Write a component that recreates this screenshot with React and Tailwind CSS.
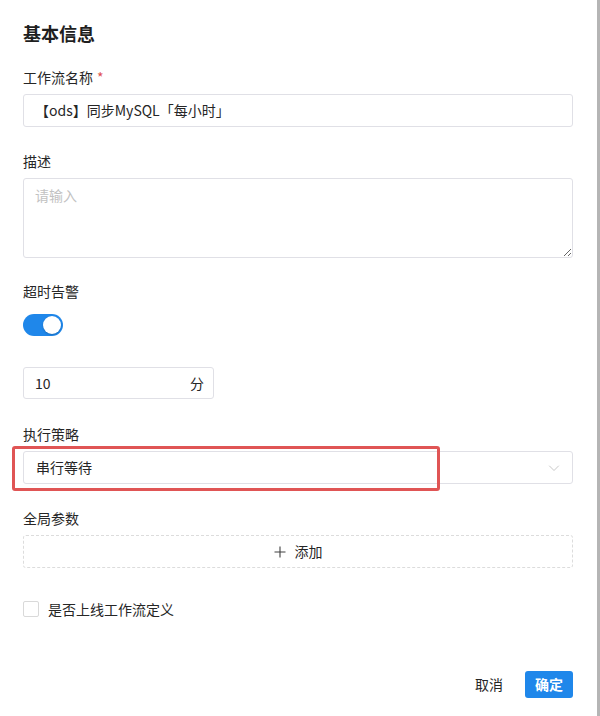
import React from "react";

const font = { fontFamily: '"Noto Sans CJK SC", "Noto Sans", sans-serif' };

function Label({ children, className = "" }) {
  return (
    <div className={`text-[14px] leading-[22px] text-[#262626] ${className}`}>{children}</div>
  );
}

export default function App() {
  return (
    <div className="w-[600px] h-[716px] bg-white flex" style={font}>
      <div className="relative flex-1 flex flex-col pl-[23px] pr-[24px]">
        <div className="pt-[20px] text-[18px] leading-[26px] font-semibold text-[#1f1f1f]">基本信息</div>

        <Label className="mt-[20px]">
          工作流名称<span className="ml-[4px] text-[#e05050]">*</span>
        </Label>
        <div className="mt-[6px] h-[33px] border border-[#e0e0e6] rounded-[3px] px-[11px] flex items-center text-[14px] text-[#262626]">
          【ods】同步MySQL「每小时」
        </div>

        <Label className="mt-[23px]">描述</Label>
        <textarea
          className="mt-[6px] h-[80px] w-full border border-[#e0e0e6] rounded-[3px] px-[11px] pt-[5px] text-[14px] leading-[22px] text-[#262626] placeholder:text-[#c2c2c2] outline-none"
          placeholder="请输入"
          style={font}
        />

        <Label className="mt-[22px]">超时告警</Label>
        <div className="mt-[12px] w-[40px] h-[22px] rounded-full bg-[#1f87ea] flex items-center justify-end pr-[2px]">
          <div className="w-[18px] h-[18px] rounded-full bg-white shadow-[0_1px_2px_rgba(0,0,0,0.2)]" />
        </div>

        <div className="mt-[31px] w-[191px] h-[32px] border border-[#e0e0e6] rounded-[3px] pl-[11px] pr-[9px] flex items-center justify-between text-[14px] text-[#262626]">
          <span>10</span>
          <span>分</span>
        </div>

        <Label className="mt-[24px]">执行策略</Label>
        <div className="mt-[6px] h-[33px] border border-[#e0e0e6] rounded-[3px] pl-[12px] pr-[11px] flex items-center justify-between text-[14px] text-[#262626]">
          <span>串行等待</span>
          <svg width="14" height="14" viewBox="0 0 14 14" fill="none">
            <path d="M2.5 5l4.5 4.5L11.5 5" stroke="#c8c8c8" strokeWidth="1" strokeLinecap="round" strokeLinejoin="round" />
          </svg>
        </div>

        <Label className="mt-[23px]">全局参数</Label>
        <div className="mt-[6px] h-[33px] border border-dashed border-[#dcdcdc] rounded-[3px] flex items-center justify-center gap-[9px] text-[14px] text-[#262626]">
          <svg width="12" height="12" viewBox="0 0 12 12" fill="none">
            <path d="M6 0.5v11M0.5 6h11" stroke="#404040" strokeWidth="1.1" />
          </svg>
          <span>添加</span>
        </div>

        <div className="mt-[30px] flex items-center gap-[9px]">
          <div className="w-[16px] h-[16px] border border-[#d9d9d9] rounded-[2px] bg-white" />
          <span className="text-[14px] leading-[22px] text-[#262626]">是否上线工作流定义</span>
        </div>

        <div className="mt-[51px] flex items-center justify-end">
          <button className="mr-[22px] text-[14px] leading-[27px] text-[#262626]">取消</button>
          <button className="h-[27px] w-[48px] rounded-[3px] bg-[#1f87ea] text-white text-[14px] font-semibold flex items-center justify-center">
            确定
          </button>
        </div>

        <div className="absolute left-[12px] top-[446px] w-[428px] h-[45px] border-[3px] border-[#e05555] rounded-[3px] pointer-events-none" />
      </div>
      <div className="w-[3px] h-full bg-[#b5b5b5]" />
    </div>
  );
}
